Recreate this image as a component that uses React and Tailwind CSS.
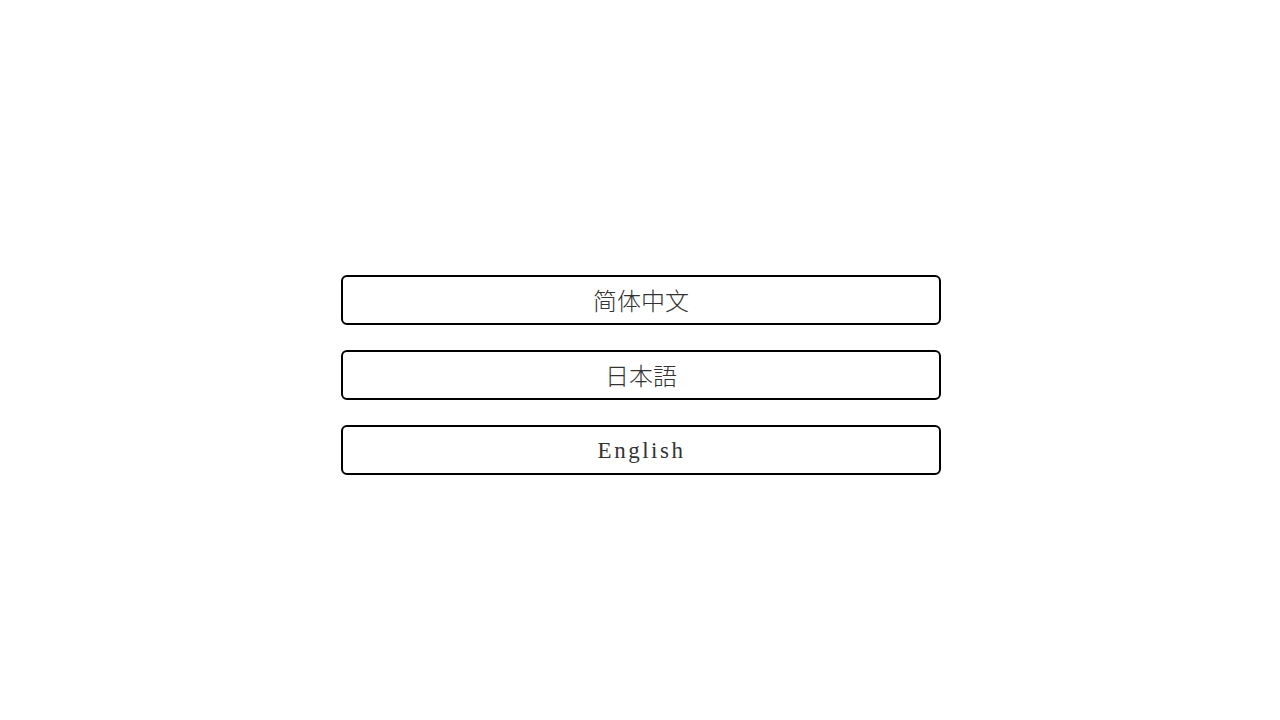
import React from "react";

const languages = [
  { code: "zh", label: "简体中文", font: "font-['Noto_Sans_CJK_SC',sans-serif] text-[24px] font-light" },
  { code: "ja", label: "日本語", font: "font-['Noto_Sans_CJK_JP',sans-serif] text-[24px] font-light" },
  { code: "en", label: "English", font: "font-['Liberation_Serif',serif] text-[23px] tracking-[2.5px] pl-[1px]" },
];

export default function App() {
  return (
    <div className="w-full h-screen bg-white flex flex-col items-center pt-[275px] pl-[2px]">
      <div className="flex flex-col gap-[25px] w-[600px]">
        {languages.map((lang) => (
          <button
            key={lang.code}
            className={`h-[50px] w-full border-2 border-black rounded-[6px] bg-white text-[#333] flex items-center justify-center leading-none ${lang.font}`}
          >
            {lang.label}
          </button>
        ))}
      </div>
    </div>
  );
}
